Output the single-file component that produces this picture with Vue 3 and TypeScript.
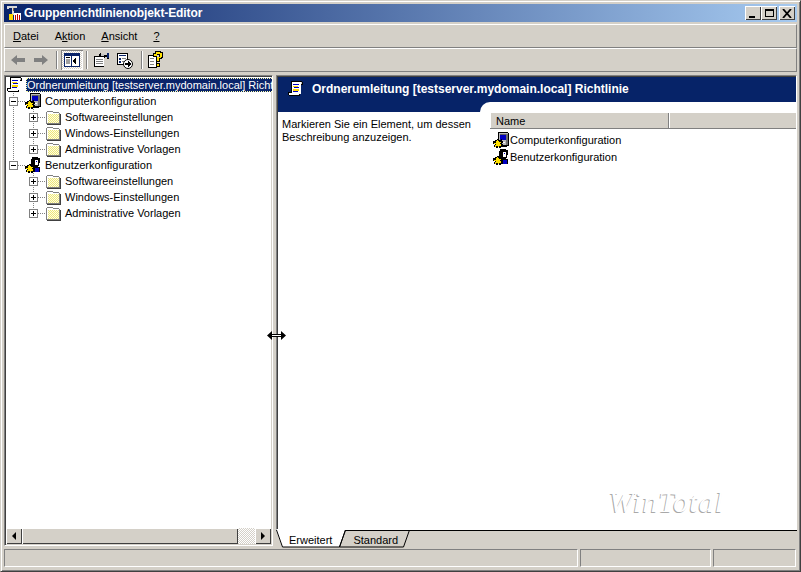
<script setup lang="ts">
const menus = [
  { pre: '', key: 'D', post: 'atei' },
  { pre: 'A', key: 'k', post: 'tion' },
  { pre: '', key: 'A', post: 'nsicht' },
  { pre: '', key: '?', post: '' },
]
const groups = [
  { name: 'Computerkonfiguration', icon: '#i-computer' },
  { name: 'Benutzerkonfiguration', icon: '#i-user' },
]
const children = ['Softwareeinstellungen', 'Windows-Einstellungen', 'Administrative Vorlagen']
</script>

<template>
  <div class="win">
    <svg class="defs" width="0" height="0">
      <defs>
        <pattern id="dith" width="2" height="2" patternUnits="userSpaceOnUse">
          <rect width="2" height="2" fill="#ffffe0" />
          <rect width="1" height="1" fill="#ece47c" />
          <rect x="1" y="1" width="1" height="1" fill="#ece47c" />
        </pattern>
        <symbol id="i-folder" viewBox="0 0 16 16" shape-rendering="crispEdges">
          <path d="M2 2h5l1 1h6v1h1v11H1V3h1z" fill="#808080" />
          <path d="M2 3h5l1 1h6v1H2z" fill="#fff" />
          <rect x="2" y="5" width="12" height="9" fill="url(#dith)" />
          <rect x="2" y="5" width="1" height="9" fill="#fff" />
          <rect x="15" y="5" width="1" height="10" fill="#404040" />
          <rect x="2" y="15" width="14" height="1" fill="#404040" />
        </symbol>
        <symbol id="i-computer" viewBox="0 0 16 16" shape-rendering="crispEdges">
          <path d="M5 0h10v1h1v13h-2v1H5z" fill="#000" />
          <rect x="6" y="1" width="9" height="12" fill="#b8b8b8" />
          <rect x="7" y="2" width="6" height="6" fill="#0000c0" />
          <rect x="7" y="2" width="6" height="1" fill="#606060" />
          <rect x="13" y="2" width="2" height="11" fill="#707070" />
          <rect x="7" y="10" width="5" height="1" fill="#fff" />
          <path d="M4 7h2v1h2V7h1v2h1v2H9v1h1v3H8v1H6v-1H5v1H3v-1H1v-2h1v-1H0V9h2V8h2z" fill="#000" />
          <path d="M4 8h1v1h1v1h2v1H7v1h1v2H6v1H5v-1H3v1H2v-2h1v-1H1v-1h2V9h1z" fill="#ffe000" />
        </symbol>
        <symbol id="i-user" viewBox="0 0 16 16" shape-rendering="crispEdges">
          <path d="M7 0h6v1h2v5h-1v3h-1v1h2v5H8V9H6V2h1z" fill="#000" />
          <rect x="10" y="3" width="3" height="5" fill="#fff" />
          <rect x="11" y="4" width="1" height="1" fill="#0000c0" />
          <rect x="10" y="11" width="4" height="4" fill="#0000c0" />
          <path d="M4 7h2v1h2V7h1v2h1v2H9v1h1v3H8v1H6v-1H5v1H3v-1H1v-2h1v-1H0V9h2V8h2z" fill="#000" />
          <path d="M4 8h1v1h1v1h2v1H7v1h1v2H6v1H5v-1H3v1H2v-2h1v-1H1v-1h2V9h1z" fill="#ffe000" />
        </symbol>
        <symbol id="i-scroll" viewBox="0 0 16 16" shape-rendering="crispEdges">
          <path d="M3 0h11v1h1v3h-2v9h-1v2H1v-1H0v-3h3z" fill="#000" />
          <rect x="4" y="1" width="9" height="12" fill="#fff" />
          <rect x="13" y="1" width="1" height="2" fill="#c0c0c0" />
          <rect x="1" y="12" width="10" height="2" fill="#fff" />
          <rect x="5" y="3" width="6" height="1" fill="#0000c0" />
          <rect x="5" y="5" width="5" height="1" fill="#ffd800" />
          <rect x="6" y="6" width="5" height="1" fill="#0000c0" />
          <rect x="5" y="8" width="6" height="2" fill="#ffd800" />
          <rect x="5" y="10" width="5" height="1" fill="#0000c0" />
        </symbol>
      </defs>
    </svg>

    <div class="title">
      <svg class="app-ico" width="16" height="16" viewBox="0 0 16 16" shape-rendering="crispEdges">
        <path d="M1 1h10v2H8v7H6V3H3v1H1z" fill="#d8d8d8" />
        <path d="M7 3h1v3H7z" fill="#806040" />
        <rect x="3" y="9" width="4" height="6" fill="#ffd800" />
        <rect x="8" y="8" width="7" height="7" fill="#fff" />
        <rect x="9" y="10" width="1" height="5" fill="#c00000" />
        <rect x="11" y="9" width="1" height="6" fill="#c00000" />
        <rect x="13" y="10" width="1" height="5" fill="#c00000" />
      </svg>
      <span class="title-text">Gruppenrichtlinienobjekt-Editor</span>
      <div class="caps">
        <button class="cap min"><i></i></button>
        <button class="cap max"><i></i></button>
        <button class="cap close">
          <svg width="10" height="9" viewBox="0 0 10 9"><path d="M1 0l8 9M9 0l-8 9" fill="none" stroke="#000" stroke-width="1.8" /></svg>
        </button>
      </div>
    </div>

    <div class="band menu">
      <span v-for="m in menus" :key="m.pre + m.key" class="menu-item">{{ m.pre }}<u>{{ m.key }}</u>{{ m.post }}</span>
    </div>

    <div class="band tools">
      <svg class="t" width="14" height="12" viewBox="0 0 14 12"><path d="M0 6l6-5v3h8v4H6v3z" fill="#808080" /></svg>
      <svg class="t fwd" width="14" height="12" viewBox="0 0 14 12"><path d="M14 6L8 1v3H0v4h8v3z" fill="#808080" /></svg>
      <span class="sep s1"></span>
      <span class="pressed">
        <svg width="16" height="14" viewBox="0 0 16 14" shape-rendering="crispEdges">
          <rect width="16" height="14" fill="#0a246a" />
          <rect x="1" y="3" width="14" height="10" fill="#fff" />
          <rect x="7" y="3" width="1" height="10" fill="#0a246a" />
          <rect x="2" y="4" width="4" height="1" fill="#000" />
          <rect x="2" y="6" width="4" height="5" fill="#a0a0a0" />
          <path d="M12 4v8L9 8z" fill="#000" />
        </svg>
      </span>
      <span class="sep s2"></span>
      <svg class="ti p" width="17" height="16" viewBox="0 0 17 16" shape-rendering="crispEdges">
        <path d="M2 4h5V2h1V1h1v1h3v1h3V1h2v6h-2V5h-2v1h-1v9H2z" fill="#000" />
        <rect x="3" y="5" width="9" height="9" fill="#fff" />
        <path d="M9 2h3v2H9z" fill="#c0c0c0" />
        <rect x="15" y="1" width="2" height="5" fill="#0a246a" />
        <rect x="4" y="7" width="7" height="1" fill="#808080" />
        <rect x="4" y="9" width="7" height="1" fill="#808080" />
        <rect x="4" y="11" width="7" height="1" fill="#808080" />
      </svg>
      <svg class="ti e" width="17" height="17" viewBox="0 0 17 17" shape-rendering="crispEdges">
        <path d="M1 1h11v7H9v5H1z" fill="#000" />
        <rect x="2" y="2" width="9" height="10" fill="#fff" />
        <rect x="3" y="3" width="7" height="1" fill="#0a246a" />
        <rect x="3" y="6" width="2" height="2" fill="#0a246a" /><rect x="6" y="6" width="4" height="1" fill="#808080" />
        <rect x="3" y="9" width="2" height="2" fill="#0a246a" /><rect x="6" y="9" width="3" height="1" fill="#808080" />
        <circle cx="12" cy="12" r="4.5" fill="#fff" stroke="#000" shape-rendering="auto" />
        <path d="M9 11h3V9l3 3-3 3v-2H9z" fill="#000" />
      </svg>
      <span class="sep s3"></span>
      <svg class="ti h" width="17" height="18" viewBox="0 0 17 18" shape-rendering="crispEdges">
        <path d="M1 4h8v1h1v12H1z" fill="#000" />
        <rect x="2" y="5" width="7" height="11" fill="#fff" />
        <rect x="3" y="7" width="4" height="1" fill="#808080" /><rect x="3" y="10" width="4" height="1" fill="#808080" /><rect x="3" y="13" width="4" height="1" fill="#808080" />
        <path d="M8 0h6v1h2v6h-1v1h-2v3H9V7h3V4h-2v2H6V2h2z" fill="#000" />
        <path d="M9 1h4v1h2v4h-1v1h-2v3h-2V6h3V3h-3v2H7V3h2z" fill="#ffe000" />
        <rect x="9" y="12" width="4" height="4" fill="#000" /><rect x="10" y="13" width="2" height="2" fill="#ffe000" />
      </svg>
    </div>

    <div class="main">
      <div class="left">
        <div class="tree">
          <svg class="vlines" width="40" height="140">
            <path d="M8.5 16V88M28.5 32V72M28.5 96V136" stroke="#808080" stroke-dasharray="1 1" fill="none" />
          </svg>
          <div class="row root">
            <svg class="ic" width="16" height="16"><use href="#i-scroll" /></svg>
            <span class="sel">Ordnerumleitung [testserver.mydomain.local] Richtlinie</span>
          </div>
          <template v-for="g in groups" :key="g.name">
            <div class="row l1">
              <span class="exp minus"></span><span class="dots"></span>
              <svg class="ic" width="16" height="16"><use :href="g.icon" /></svg>
              <span class="lbl">{{ g.name }}</span>
            </div>
            <div v-for="c in children" :key="c" class="row l2">
              <span class="exp plus"></span><span class="dots"></span>
              <svg class="ic" width="16" height="16"><use href="#i-folder" /></svg>
              <span class="lbl">{{ c }}</span>
            </div>
          </template>
        </div>
        <div class="hbar">
          <span class="sbtn"><i class="tri-l"></i></span>
          <span class="thumb"></span>
          <span class="track"></span>
          <span class="sbtn"><i class="tri-r"></i></span>
        </div>
      </div>

      <div class="splitter"></div>

      <div class="right">
        <div class="pane">
          <div class="head">
            <svg class="ic" width="16" height="16"><use href="#i-scroll" /></svg>
            <span class="head-text">Ordnerumleitung [testserver.mydomain.local] Richtlinie</span>
            <span class="corner"></span>
          </div>
          <div class="body">
            <p class="desc">Markieren Sie ein Element, um dessen<br />Beschreibung anzuzeigen.</p>
            <div class="list">
              <div class="lhead"><span class="col c1">Name</span><span class="col c2"></span></div>
              <div v-for="g in groups" :key="g.name" class="lrow">
                <svg class="ic" width="16" height="16"><use :href="g.icon" /></svg>
                <span>{{ g.name }}</span>
              </div>
            </div>
            <span class="mark">WinTotal</span>
          </div>
        </div>
        <div class="tabs">
          <svg class="tabs-svg" width="140" height="18">
            <path d="M0 0L6 17H64L70 0z" fill="#fff" />
            <path d="M0.5 0L6.5 17H63.5L69.5 0" fill="none" stroke="#000" />
            <path d="M69.5 0L63.5 17H127.5L133.5 0" fill="none" stroke="#000" />
          </svg>
          <span class="tab t1">Erweitert</span>
          <span class="tab t2">Standard</span>
        </div>
      </div>
    </div>

    <div class="status">
      <span class="st a"></span><span class="st b"></span><span class="st c"></span>
    </div>

    <svg class="cursor" width="19" height="9" viewBox="0 0 19 9">
      <path d="M0 4.5L5 0V3H14V0L19 4.5L14 9V6H5V9z" fill="#000" />
      <rect x="5" y="4" width="9" height="1" fill="#fff" />
    </svg>
  </div>
</template>

<style>
html, body { margin: 0; background: #d4d0c8; }
</style>

<style scoped>
.win {
  position: relative; width: 801px; height: 572px; box-sizing: border-box; overflow: hidden;
  background: #d4d0c8; font: 11px "Liberation Sans", Arial, sans-serif; color: #000;
  border: 1px solid; border-color: #d4d0c8 #404040 #404040 #d4d0c8;
  box-shadow: inset 1px 1px 0 #fff, inset -1px -1px 0 #808080;
  padding: 3px 3px 4px; display: flex; flex-direction: column;
}
.defs { position: absolute; }
.ic { flex: none; }
.title {
  height: 18px; flex: none; display: flex; align-items: center;
  background: linear-gradient(90deg, #0a246a, #a6caf0); padding: 0 2px; color: #fff;
}
.app-ico { margin-right: 2px; flex: none; }
.title-text { font-weight: bold; font-size: 12px; flex: 1; letter-spacing: -0.1px; }
.caps { display: flex; }
.cap {
  width: 16px; height: 14px; padding: 0; box-sizing: border-box; background: #d4d0c8; border: 0;
  box-shadow: inset 1px 1px 0 #fff, inset -1px -1px 0 #404040;
  position: relative; display: flex; align-items: center; justify-content: center;
}
.close { margin-left: 2px; }
.min i { width: 6px; height: 2px; background: #000; margin-top: 7px; margin-right: 2px; }
.max i { width: 9px; height: 8px; box-sizing: border-box; border: 1px solid #000; border-top-width: 2px; }
.band {
  flex: none; box-sizing: border-box; display: flex; align-items: center; height: 24px;
  border: 1px solid; border-color: #fff #808080 #808080 #fff;
}
.menu { margin-top: 2px; padding-left: 8px; }
.menu-item { margin-right: 16px; font-size: 11px; }
.tools { position: relative; }
.t { margin-left: 6px; }
.fwd { margin-left: 9px; }
.sep { width: 0; height: 18px; border-left: 1px solid #808080; border-right: 1px solid #fff; }
.s1 { margin-left: 8px; }
.pressed {
  margin-left: 3px; width: 22px; height: 20px; display: flex; align-items: center; justify-content: center;
  background: #fff repeating-conic-gradient(#d4d0c8 0 25%, #fff 0 50%) 0 0 / 2px 2px;
  box-shadow: inset 1px 1px 0 #808080, inset -1px -1px 0 #fff;
}
.s2 { margin-left: 3px; }
.ti { margin-left: 6px; }
.p { margin-left: 4px; }
.e { margin-left: 7px; }
.s3 { margin-left: 8px; }
.h { margin-left: 4px; }
.main { flex: 1; display: flex; min-height: 0; margin-top: 2px; }
.left {
  width: 269px; flex: none; margin: 1px 0 3px 0; box-sizing: border-box; display: flex; flex-direction: column;
  background: #fff; border: 1px solid; border-color: #808080 #fff #fff #808080;
  box-shadow: inset 1px 1px 0 #404040, inset -1px -1px 0 #d4d0c8;
}
.tree { flex: 1; position: relative; overflow: hidden; padding: 1px 1px 0 1px; min-height: 0; }
.vlines { position: absolute; left: 0; top: 1px; overflow: visible; }
.row { height: 16px; display: flex; align-items: center; white-space: nowrap; position: relative; }
.root { padding-left: 1px; }
.sel {
  background: #0a246a; color: #fff; margin-left: 3px; padding: 0 1px; height: 14px; line-height: 14px;
  outline: 1px dotted #ffffb0; outline-offset: -1px;
}
.l1 { padding-left: 3px; }
.l2 { padding-left: 23px; }
.exp { width: 9px; height: 9px; box-sizing: border-box; border: 1px solid #808080; background: #fff; position: relative; flex: none; }
.exp::before { content: ""; position: absolute; left: 1px; top: 3px; width: 5px; height: 1px; background: #000; }
.plus::after { content: ""; position: absolute; left: 3px; top: 1px; width: 1px; height: 5px; background: #000; }
.dots { width: 7px; flex: none; border-top: 1px dotted #808080; }
.lbl { margin-left: 4px; }
.hbar { height: 16px; flex: none; display: flex; background: #d4d0c8; margin: 0 1px 1px 1px; }
.sbtn {
  width: 16px; flex: none; display: flex; align-items: center; justify-content: center; background: #d4d0c8;
  box-shadow: inset 1px 1px 0 #fff, inset -1px -1px 0 #404040;
}
.tri-l { border: 4px solid transparent; border-left: 0; border-right-color: #000; }
.tri-r { border: 4px solid transparent; border-right: 0; border-left-color: #000; }
.thumb { width: 216px; flex: none; background: #d4d0c8; box-shadow: inset 1px 1px 0 #fff, inset -1px -1px 0 #404040; }
.track { flex: 1; background: repeating-conic-gradient(#d4d0c8 0 25%, #fff 0 50%) 0 0 / 2px 2px; }
.splitter { width: 3px; flex: none; }
.right { flex: 1; min-width: 0; display: flex; flex-direction: column; }
.pane {
  flex: 1; min-height: 0; display: flex; flex-direction: column; background: #fff; position: relative;
  border: 1px solid; border-color: #808080 #fff #fff #808080;
  box-shadow: inset 1px 1px 0 #404040; margin-top: 1px; padding: 1px 0 0 1px;
}
.head {
  height: 35px; flex: none; background: #062368; color: #fff; position: relative; display: flex; align-items: flex-start;
  padding: 4px 0 0 10px; box-sizing: border-box;
}
.head-text { font-weight: bold; font-size: 12px; margin-left: 8px; line-height: 16px; }
.corner { position: absolute; right: 0; bottom: 0; left: 202px; height: 10px; background: #fff; border-top-left-radius: 10px; }
.body { flex: 1; display: grid; grid-template-columns: 212px 1fr; position: relative; min-height: 0; }
.desc { margin: 6px 0 0 4px; line-height: 13px; }
.list { min-width: 0; }
.lhead { height: 16px; display: flex; margin-top: 1px; box-sizing: border-box; background: #d4d0c8; border-bottom: 1px solid #808080; }
.col { box-sizing: border-box; line-height: 17px; border-left: 1px solid #fff; }
.c1 { width: 179px; padding-left: 5px; border-right: 1px solid #808080; }
.c2 { flex: 1; }
.lrow { height: 17px; display: flex; align-items: center; padding-left: 3px; gap: 1px; }
.lhead + .lrow { margin-top: 2px; }
.mark {
  position: absolute; right: 72px; bottom: 10px; font: italic 30px "Liberation Serif", serif; letter-spacing: 1px;
  color: #fff; text-shadow: -1px 1px 0 #a8a8a8;
}
.tabs { height: 16px; flex: none; position: relative; display: flex; border-top: 1px solid #000; margin-bottom: 2px; }
.tabs-svg { position: absolute; left: 0; top: -1px; }
.tab { position: relative; line-height: 19px; }
.t1 { margin-left: 13px; }
.t2 { margin-left: 21px; }
.status { height: 18px; flex: none; display: flex; gap: 2px; padding-right: 1px; }
.st { box-sizing: border-box; border: 1px solid; border-color: #808080 #fff #fff #808080; }
.a { flex: 1; }
.b { width: 131px; }
.c { width: 83px; }
.cursor { position: absolute; left: 266px; top: 330px; }
</style>
